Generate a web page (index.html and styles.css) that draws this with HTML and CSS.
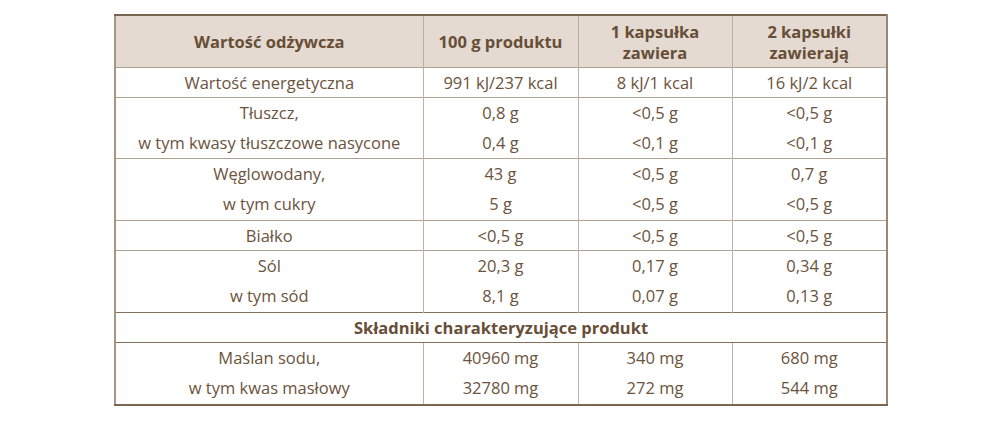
FILE: index.html
```html
<!DOCTYPE html>
<html lang="pl">
<head>
<meta charset="utf-8">
<link rel="stylesheet" href="styles.css">
</head>
<body>
<table class="nt">
  <colgroup>
    <col class="c1"><col class="c2"><col class="c3"><col class="c4">
  </colgroup>
  <thead>
    <tr class="head">
      <th>Wartość odżywcza</th>
      <th>100 g produktu</th>
      <th>1 kapsułka<br>zawiera</th>
      <th>2 kapsułki<br>zawierają</th>
    </tr>
  </thead>
  <tbody>
    <tr class="grp"><td>Wartość energetyczna</td><td>991 kJ/237 kcal</td><td>8 kJ/1 kcal</td><td>16 kJ/2 kcal</td></tr>
    <tr class="grp"><td>Tłuszcz,</td><td>0,8 g</td><td>&lt;0,5 g</td><td>&lt;0,5 g</td></tr>
    <tr class="sub"><td>w tym kwasy tłuszczowe nasycone</td><td>0,4 g</td><td>&lt;0,1 g</td><td>&lt;0,1 g</td></tr>
    <tr class="grp"><td>Węglowodany,</td><td>43 g</td><td>&lt;0,5 g</td><td>0,7 g</td></tr>
    <tr class="sub tall"><td>w tym cukry</td><td>5 g</td><td>&lt;0,5 g</td><td>&lt;0,5 g</td></tr>
    <tr class="grp"><td>Białko</td><td>&lt;0,5 g</td><td>&lt;0,5 g</td><td>&lt;0,5 g</td></tr>
    <tr class="grp"><td>Sól</td><td>20,3 g</td><td>0,17 g</td><td>0,34 g</td></tr>
    <tr class="sub tall"><td>w tym sód</td><td>8,1 g</td><td>0,07 g</td><td>0,13 g</td></tr>
    <tr class="grp dark section"><td colspan="4">Składniki charakteryzujące produkt</td></tr>
    <tr class="grp dark"><td>Maślan sodu,</td><td>40960 mg</td><td>340 mg</td><td>680 mg</td></tr>
    <tr class="sub tall"><td>w tym kwas masłowy</td><td>32780 mg</td><td>272 mg</td><td>544 mg</td></tr>
  </tbody>
</table>
</body>
</html>
```

FILE: styles.css
```css
html, body {
  margin: 0;
  padding: 0;
  background: #ffffff;
}
body {
  padding: 14px 0 0 114px;
  font-family: "Open Sans", "Liberation Sans", sans-serif;
  color: #6b533d;
}
.nt {
  border-collapse: collapse;
  width: 772px;
  table-layout: fixed;
  border-top: 2px solid #7a6551;
  border-left: 2px solid #a89583;
  border-right: 2px solid #9a8673;
  border-bottom: 2px solid #7a6551;
}
.c1 { width: 308px; }
.c2 { width: 155px; }
.c3 { width: 154px; }
.c4 { width: 155px; }
.nt th, .nt td {
  text-align: center;
  padding: 0;
  font-size: 16.5px;
  line-height: 29px;
  height: 29px;
  border-left: 1px solid #bfb1a4;
}
.nt th:first-child, .nt td:first-child {
  border-left: none;
}
.head th {
  background: #e4dad1;
  font-weight: 700;
  line-height: 21px;
  height: 51px;
  border-left-color: #bcad9f;
  color: #674e37;
}
.grp td {
  border-top: 1px solid #b1a293;
}
.dark td {
  border-top-color: #85705c;
}
.section td {
  font-weight: 700;
  color: #674e37;
}
.sub td {
  height: 31px;
  line-height: 31px;
}
.sub.tall td {
  height: 32px;
  line-height: 32px;
}
```
